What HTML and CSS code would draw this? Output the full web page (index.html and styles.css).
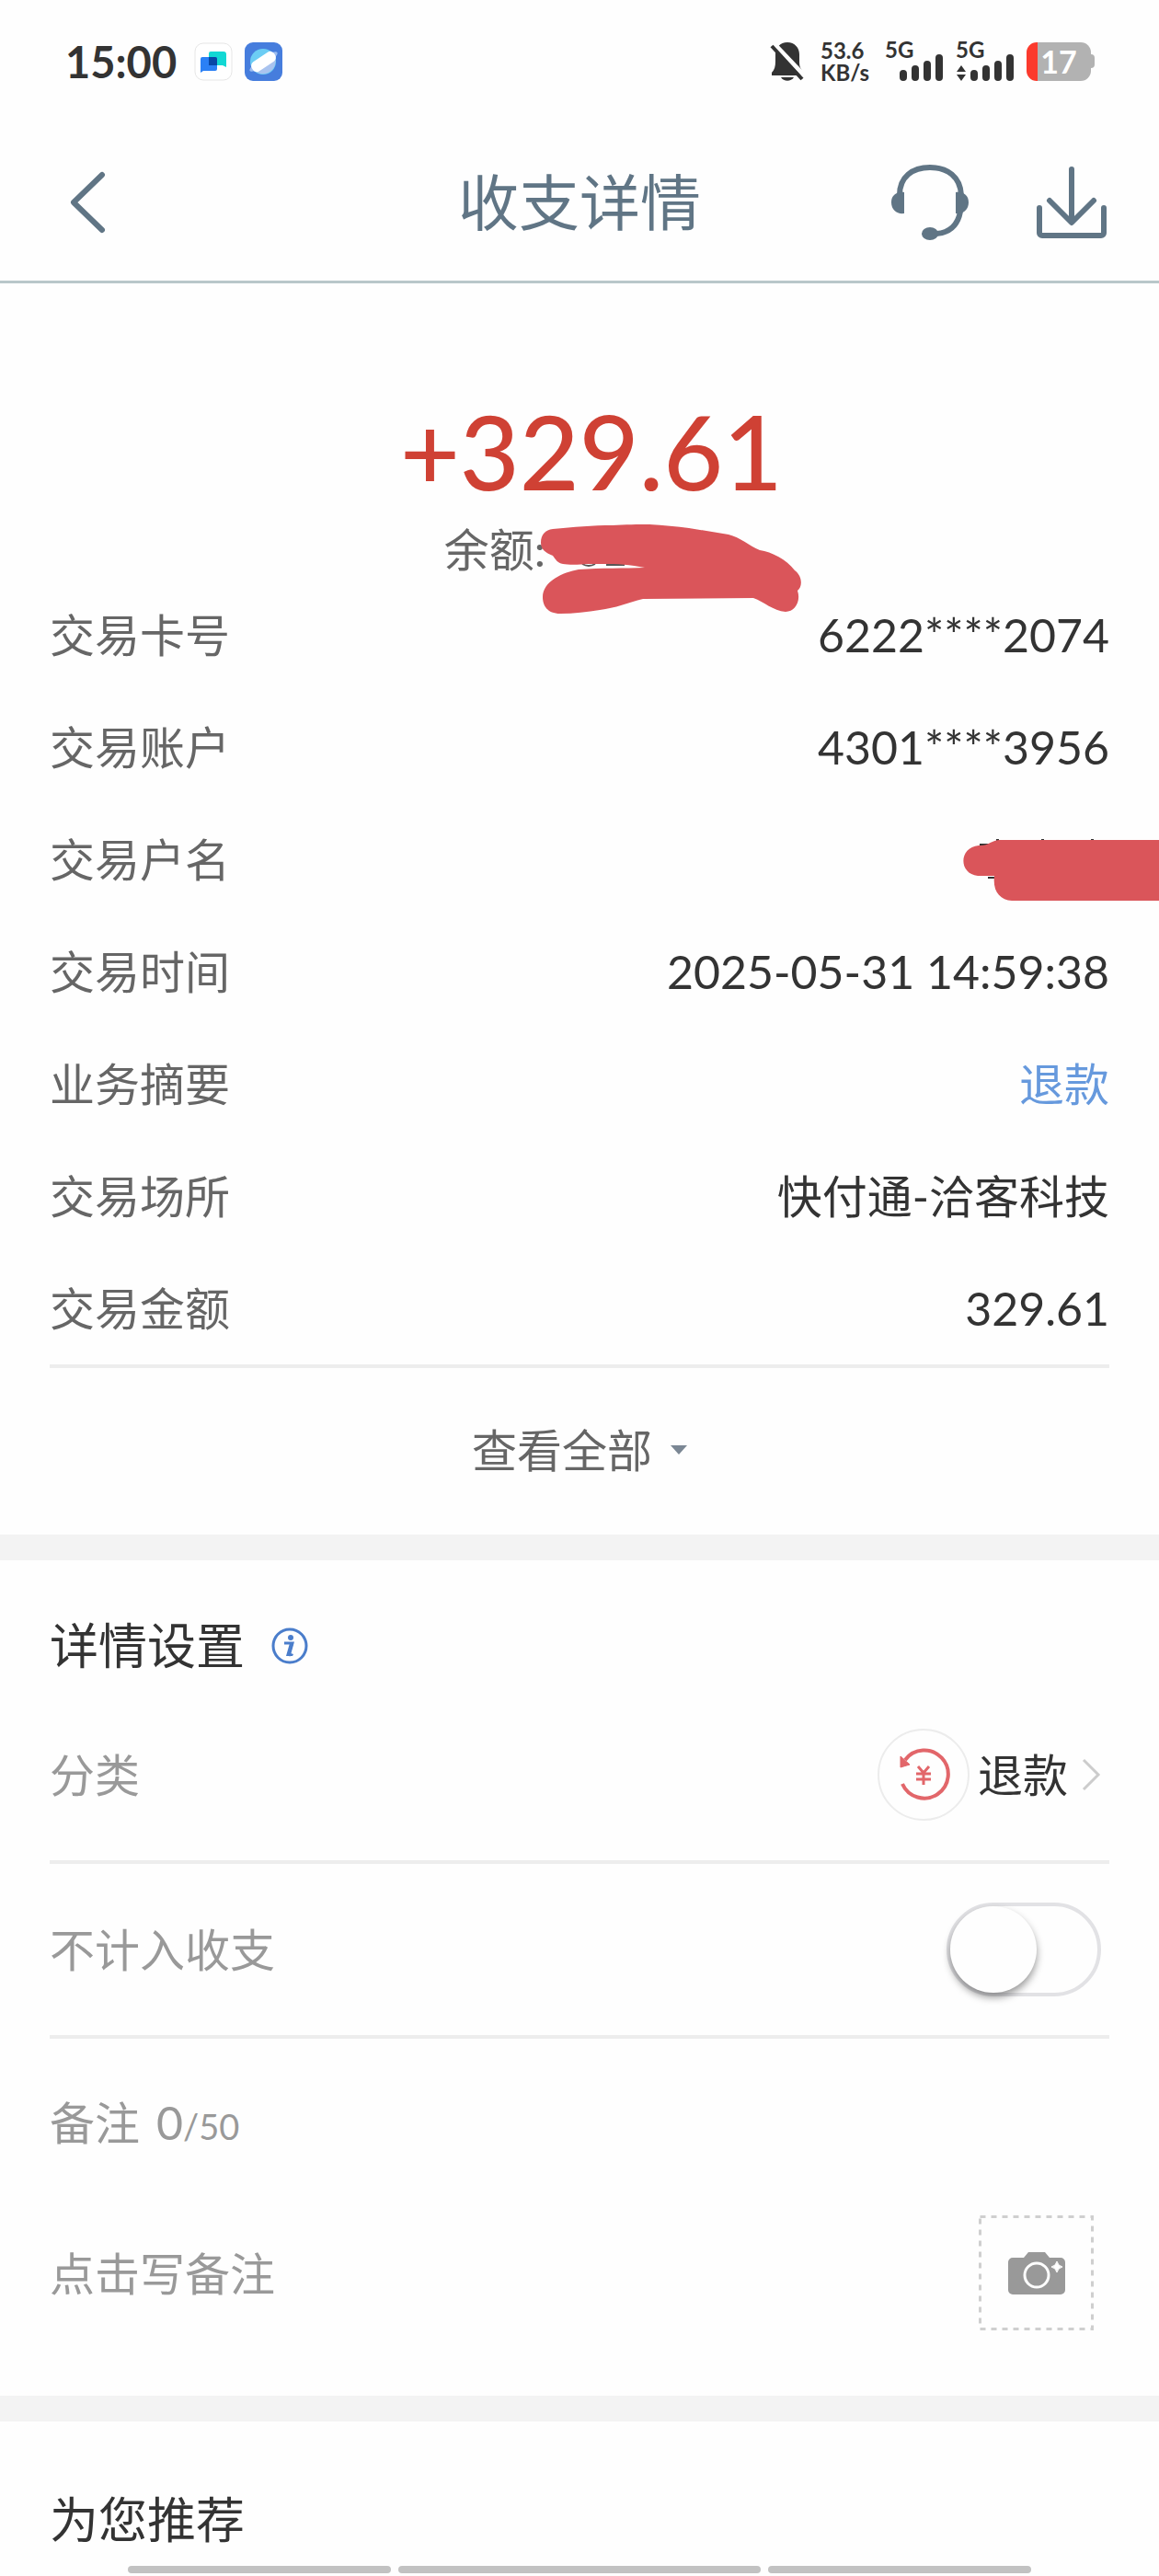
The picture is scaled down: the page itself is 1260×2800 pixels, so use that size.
FILE: index.html
```
<!DOCTYPE html>
<html lang="zh-CN">
<head>
  <meta charset="UTF-8" />
  <meta name="viewport" content="width=device-width, initial-scale=1.0" />
  <title>收支详情</title>
  <link rel="stylesheet" href="styles.css">
</head>
<body>
  <div class="status-bar">
    <div class="status-left">
      <span class="clock">15:00</span>
      <svg class="app-icon" viewBox="0 0 42 42">
        <rect x="1" y="1" width="40" height="40" rx="9" fill="#fff" stroke="#e6e6e6" />
        <path d="M18 10h14a3 3 0 0 1 3 3v14l-4-2H16V12a2 2 0 0 1 2-2z" fill="#12d8d4" />
        <path d="M9 16h14a2 2 0 0 1 2 2v11a2 2 0 0 1-2 2H10l-3 2V18a2 2 0 0 1 2-2z" fill="#2b80f5" />
        <path d="M16 16h7a2 2 0 0 1 2 2v7h-9z" fill="#0847a6" />
      </svg>
      <svg class="app-icon" viewBox="0 0 42 42">
        <rect width="41" height="42" rx="9" fill="#467ddd" />
        <circle cx="20" cy="21" r="14" fill="#6ccdf4" />
        <path d="M8 28 33 16a14 14 0 0 1-25 12z" fill="#a9c3ef" />
        <ellipse cx="20.500" cy="21" rx="18" ry="4.500" fill="#9dbdf0" transform="rotate(-34 20.500 21)" />
        <rect x="6" y="15" width="29" height="12" rx="5" fill="#fff" transform="rotate(-34 20.500 21)" />
      </svg>
    </div>
    <div class="status-right">
      <svg class="bell" viewBox="0 0 38 44">
        <path d="M19 1c8 0 13 6 13 13v9c0 5 2 8 5 11v3H2v-3c3-3 4-7 4-12v-8C6 7 11 1 19 1z" fill="#333" />
        <path d="M12 39h14c-3 5-11 5-14 0z" fill="#333" />
        <path d="M3 1 38 38" stroke="#fefefe" stroke-width="5" />
        <path d="M2 5 35 41" stroke="#333" stroke-width="4" />
      </svg>
      <span class="speed">53.6<br>KB/s</span>
      <div class="signal">
        <span class="network">5G</span>
        <svg class="bars" viewBox="0 0 64 30">
          <path d="M20 22v4M33 17v9M46 12v14M59 5v21" stroke="#333" stroke-width="8" stroke-linecap="round" />
        </svg>
      </div>
      <div class="signal">
        <span class="network">5G</span>
        <svg class="bars" viewBox="0 0 64 30">
          <path d="M1 20 6 13l5 7zM1 23l5 7 5-7z" fill="#333" />
          <path d="M20 22v4M33 17v9M46 12v14M59 5v21" stroke="#333" stroke-width="8" stroke-linecap="round" />
        </svg>
      </div>
      <div class="battery">17</div>
    </div>
  </div>

  <header class="navbar">
    <button class="back" aria-label="返回">
      <svg viewBox="0 0 40 68" width="40" height="68">
        <path d="M36 4 5 34l31 30" class="line" />
      </svg>
    </button>
    <h1>收支详情</h1>
    <div class="nav-actions">
      <button aria-label="客服">
        <svg viewBox="0 0 86 84" width="86" height="84">
          <path d="M10 34C10 14 24 4 43 4s33 10 34 30M76 52C73 68 63 75 50 76" class="line" />
          <path d="M15 31v23c-8 1-14-4-14-12s6-12 14-11zM71 31v23c8 1 14-4 14-12s-6-12-14-11z" class="solid" />
          <ellipse cx="43" cy="76" rx="9" ry="7" class="solid" />
        </svg>
      </button>
      <button aria-label="下载">
        <svg viewBox="0 0 78 80" width="78" height="80">
          <path d="M39 4v57M15 38l24 24 24-24M4 46v27a3 3 0 0 0 3 3h64a3 3 0 0 0 3-3V46" class="line" />
        </svg>
      </button>
    </div>
  </header>

  <main>
    <section class="summary">
      <div class="amount">+329.61</div>
      <div class="balance">
        <span>余额:</span>
        <div class="balance-value">
          <svg class="mask mask-balance" viewBox="588 569 286 100">
            <path d="M634 613q7 4 14 0M660 614h20" fill="none" stroke="#555" stroke-width="2" />
            <path d="M589 590C589 581 594 576 602 575C625 573 645 571 667 571C680 570 695 570 707 570C722 571 737 572 750 574L793 581C806 584 815 593 827 598C840 600 856 608 865 620C873 626 874 637 868 642C872 654 865 665 855 665C841 664 832 654 820 650L700 651C684 655 670 661 653 663C640 665 625 667 610 667C596 667 591 658 591 649C591 632 613 622 630 619C655 617 680 618 702 617C680 612 660 613 640 613C630 614 618 614 613 613C607 612 605 608 602 604C594 601 589 597 589 590Z" />
          </svg>
        </div>
      </div>
    </section>

    <dl class="details">
      <div class="row"><dt>交易卡号</dt><dd>6222****2074</dd></div>
      <div class="row"><dt>交易账户</dt><dd>4301****3956</dd></div>
      <div class="row">
        <dt>交易户名</dt>
        <dd class="masked">
          <svg class="mask mask-name" viewBox="1046 911 214 70">
            <path d="M1065 918h12M1083 913h3M1132 913h3M1186 913h3M1074 954h8" stroke="#333" stroke-width="2" />
            <path d="M1064 919C1074 920 1078 913 1087 913H1260V979H1100C1087 978 1079 969 1081 952H1063C1042 950 1042 921 1064 919Z" />
          </svg>
        </dd>
      </div>
      <div class="row"><dt>交易时间</dt><dd>2025-05-31 14:59:38</dd></div>
      <div class="row"><dt>业务摘要</dt><dd class="cjk"><a href="#">退款</a></dd></div>
      <div class="row"><dt>交易场所</dt><dd class="cjk">快付通-洽客科技</dd></div>
      <div class="row"><dt>交易金额</dt><dd>329.61</dd></div>
    </dl>
    <button class="view-all">查看全部
      <svg viewBox="0 0 18 10" width="18" height="10"><path d="M0 0h18L9 10z" fill="#7b8794" /></svg>
    </button>

    <section class="settings">
      <h2>详情设置
        <svg viewBox="0 0 42 42" width="42" height="42">
          <circle cx="21" cy="21" r="18" fill="none" stroke="#4a7dcb" stroke-width="3" />
          <circle cx="22" cy="12" r="3" fill="#4a7dcb" />
          <path d="M15 18h9l-4 14" fill="none" stroke="#4a7dcb" stroke-width="3" />
          <path d="M21 18h4l-3 11 3 1-1 2h-7z" fill="#4a7dcb" />
        </svg>
      </h2>
      <button class="setting">
        <span>分类</span>
        <span class="category">
          <svg viewBox="0 0 102 102" width="102" height="102">
            <circle cx="51" cy="51" r="49" fill="none" stroke="#ececec" stroke-width="2" />
            <path d="M31 35A26 26 0 1 1 28 61" fill="none" stroke="#e2666a" stroke-width="4" />
            <path d="M26 31l10 9-10 3z" fill="#e2666a" stroke="#e2666a" />
            <path d="M45 42l6 7 6-7M43 50h16M43 56h16M51 49v13" fill="none" stroke="#e2666a" stroke-width="3" />
          </svg>
          退款
          <svg class="arrow" viewBox="0 0 22 38" width="22" height="38">
            <path d="M3 3l16 16L3 35" fill="none" stroke="#ccc" stroke-width="3" />
          </svg>
        </span>
      </button>
      <div class="setting">
        <label for="exclude">不计入收支</label>
        <input type="checkbox" id="exclude" class="switch" />
      </div>
      <div class="remark">
        <label for="note">备注<span class="count">0<small>/50</small></span></label>
        <div class="note-row">
          <input type="text" id="note" maxlength="50" placeholder="点击写备注" />
          <button class="photo" aria-label="添加图片">
            <svg viewBox="0 0 125 125" width="125" height="125">
              <rect x="1.500" y="1.500" width="122" height="122" fill="none" stroke="#cfcfcf" stroke-width="3" stroke-dasharray="6 6" />
              <g transform="translate(32 39)">
                <path d="M22 1h18l5 6h12a5 5 0 0 1 5 5v30a5 5 0 0 1-5 5H5a5 5 0 0 1-5-5V12a5 5 0 0 1 5-5h12z" fill="#999" />
                <circle cx="31" cy="26" r="13" fill="none" stroke="#fefefe" stroke-width="3" />
                <path d="M53 11q1 5 6 6-5 1-6 6-1-5-6-6 5-1 6-6z" fill="#fefefe" stroke="#fefefe" />
              </g>
            </svg>
          </button>
        </div>
      </div>
    </section>

    <section class="recommend">
      <h2>为您推荐</h2>
    </section>
  </main>

  <div class="gesture-bar"><i></i><i class="wide"></i><i></i></div>
</body>
</html>
```
FILE: styles.css
```
* {
  box-sizing: border-box;
}
body {
  margin: 0;
  background: #fefefe;
  color: #333;
  font-family: Lato, "Noto Sans CJK SC", sans-serif;
  font-size: 49px;
  line-height: 60px;
}
button {
  background: none;
  border: none;
  padding: 0;
  color: inherit;
  font: inherit;
  cursor: pointer;
}
button svg {
  display: block;
}
h1, h2 {
  margin: 0;
  font-weight: normal;
}

/* Status bar */
.status-bar {
  display: flex;
  justify-content: space-between;
  align-items: center;
  height: 140px;
  padding: 0 74px 6px 71px;
}
.status-left, .status-right {
  display: flex;
  align-items: center;
}
.status-left {
  gap: 13px;
}
.clock {
  margin-right: 6px;
  font-size: 47px;
  font-weight: bold;
}
.app-icon {
  width: 42px;
  height: 42px;
}
.bell {
  width: 38px;
  height: 44px;
  margin-right: 17px;
}
.speed {
  width: 55px;
  margin-right: 15px;
  font-size: 24px;
  font-weight: bold;
  line-height: 24px;
  white-space: nowrap;
}
.signal {
  position: relative;
  width: 64px;
  height: 42px;
  margin-right: 13px;
}
.network {
  position: absolute;
  top: -4px;
  left: 0;
  font-size: 24px;
  font-weight: bold;
  line-height: 24px;
}
.bars {
  display: block;
  width: 64px;
  height: 30px;
  margin-top: 12px;
}
.battery {
  position: relative;
  width: 70px;
  height: 42px;
  border-radius: 11px;
  background: linear-gradient(90deg, #fb3a2d 12px, #b2b2b2 12px);
  color: #fff;
  font-size: 34px;
  font-weight: bold;
  line-height: 42px;
  text-align: center;
}
.battery::after {
  content: "";
  position: absolute;
  right: -4px;
  top: 13px;
  width: 4px;
  height: 15px;
  border-radius: 0 4px 4px 0;
  background: #b2b2b2;
}

/* Title bar */
.navbar {
  display: grid;
  grid-template-columns: 1fr auto 1fr;
  align-items: center;
  height: 168px;
  padding: 0 56px 6px;
  border-bottom: 3px solid #b9c7ca;
  color: #607585;
}
.navbar h1 {
  font-size: 66px;
}
.back {
  justify-self: start;
  margin-left: 19px;
}
.nav-actions {
  display: flex;
  justify-content: flex-end;
  align-items: center;
  gap: 72px;
}
.line {
  fill: none;
  stroke: #607585;
  stroke-width: 6;
  stroke-linecap: round;
  stroke-linejoin: round;
}
.solid {
  fill: #607585;
}

/* Amount */
.summary {
  padding: 122px 54px 2px;
  text-align: center;
}
.amount {
  padding-left: 26px;
  color: #cf4134;
  font-size: 112px;
  font-weight: 500;
  line-height: 120px;
}
.balance {
  display: flex;
  justify-content: center;
  margin-top: 17px;
  color: #666;
}
.balance-value {
  position: relative;
  width: 184px;
}
.mask {
  position: absolute;
  fill: #da555a;
}
.mask-balance {
  top: 2px;
  left: -6px;
  width: 286px;
  height: 100px;
}
.mask-name {
  top: 38px;
  right: -54px;
  width: 214px;
  height: 70px;
}

/* Transaction details */
.details {
  margin: 0 54px;
  border-bottom: 4px solid #ededed;
}
.row {
  display: flex;
  justify-content: space-between;
  height: 122px;
  line-height: 122px;
}
.row dt {
  color: #666;
}
.row dd {
  margin: 0;
  font-size: 50px;
}
.row .cjk {
  font-size: 49px;
}
.masked {
  position: relative;
}
.row a {
  color: #6699dd;
  text-decoration: none;
}
.view-all {
  display: flex;
  justify-content: center;
  align-items: center;
  gap: 20px;
  width: 100%;
  height: 181px;
  padding-bottom: 4px;
  color: #666;
}

/* Settings */
.settings, .recommend {
  padding: 0 54px;
  border-top: 28px solid #f3f3f3;
}
h2 {
  display: flex;
  align-items: center;
  gap: 28px;
  font-size: 53px;
  line-height: 94px;
}
.settings h2 {
  padding-top: 46px;
}
.recommend h2 {
  padding-top: 60px;
}
.setting {
  display: flex;
  justify-content: space-between;
  align-items: center;
  width: 100%;
  height: 190px;
  padding-right: 9px;
  border-bottom: 4px solid #ededed;
  color: #999;
}
.category {
  display: flex;
  align-items: center;
  gap: 8px;
  color: #333;
}
.arrow {
  margin-left: 6px;
}
.switch {
  appearance: none;
  width: 168px;
  height: 102px;
  margin: 0;
  border: 4px solid #e2e2e5;
  border-radius: 51px;
  cursor: pointer;
}
.switch::before {
  content: "";
  display: block;
  width: 94px;
  height: 94px;
  border-radius: 50%;
  background: #fefefe;
  box-shadow: 0 5px 9px rgba(0, 0, 0, 0.4);
}
.switch:checked {
  background: #4a7dcb;
}
.switch:checked::before {
  margin-left: 66px;
}
.remark {
  padding: 56px 17px 71px 0;
  color: #999;
}
.remark label {
  display: block;
  line-height: 70px;
}
.count {
  margin-left: 18px;
  font-size: 50px;
}
.count small {
  font-size: 38px;
}
.note-row {
  display: flex;
  justify-content: space-between;
  align-items: center;
  margin-top: 62px;
}
.note-row input {
  flex: 1;
  min-width: 0;
  padding: 0;
  border: none;
  outline: none;
  background: none;
  color: #333;
  font: inherit;
}
.note-row input::placeholder {
  color: #999;
}

/* System gesture bar */
.gesture-bar {
  position: fixed;
  left: 11%;
  right: 11%;
  bottom: 3px;
  display: flex;
  gap: 8px;
}
.gesture-bar i {
  flex: 286;
  height: 8px;
  border-radius: 4px;
  background: #c2c2c2;
}
.gesture-bar .wide {
  flex: 394;
}
```
